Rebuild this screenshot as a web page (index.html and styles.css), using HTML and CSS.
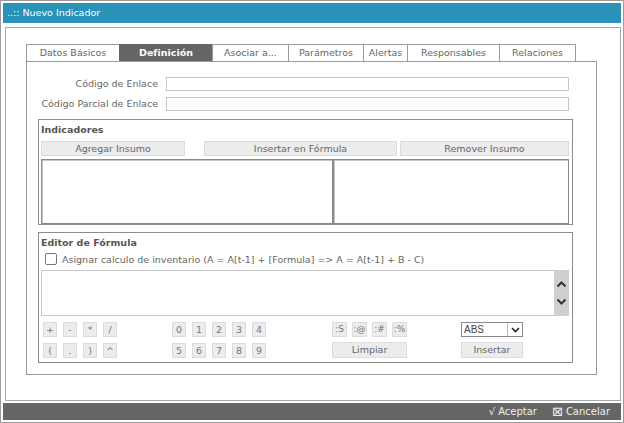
FILE: index.html
```html
<!DOCTYPE html>
<html lang="es">
<head>
<meta charset="utf-8">
<title>Nuevo Indicador</title>
<link rel="stylesheet" href="styles.css">
</head>
<body>
<div class="window">
  <div class="titlebar">..:: Nuevo Indicador</div>
  <div class="panel">
    <div class="tabs">
      <div class="tab">Datos Básicos</div>
      <div class="tab active">Definición</div>
      <div class="tab">Asociar a...</div>
      <div class="tab">Parámetros</div>
      <div class="tab">Alertas</div>
      <div class="tab">Responsables</div>
      <div class="tab last">Relaciones</div>
    </div>
    <div class="tabpanel">
      <div class="form">
        <label class="lbl">Código de Enlace</label>
        <div class="input"></div>
        <label class="lbl">Código Parcial de Enlace</label>
        <div class="input"></div>
      </div>

      <div class="fieldset indicadores">
        <div class="legend">Indicadores</div>
        <div class="btnrow">
          <div class="btn btn-agregar">Agregar Insumo</div>
          <div class="btn btn-insertar">Insertar en Fórmula</div>
          <div class="btn btn-remover">Remover Insumo</div>
        </div>
        <div class="lists">
          <div class="list"></div>
          <div class="list"></div>
        </div>
      </div>

      <div class="fieldset editor">
        <div class="legend">Editor de Fórmula</div>
        <div class="checkrow">
          <span class="checkbox"></span>
          <span>Asignar calculo de inventario (A = A[t-1] + [Formula] =&gt; A = A[t-1] + B - C)</span>
        </div>
        <div class="textarea">
          <div class="scrollbar">
            <svg width="11" height="8" viewBox="0 0 11 8"><path d="M1.5 6.5 L5.5 2.5 L9.5 6.5" fill="none" stroke="#333" stroke-width="2"/></svg>
            <svg width="11" height="8" viewBox="0 0 11 8"><path d="M1.5 1.5 L5.5 5.5 L9.5 1.5" fill="none" stroke="#333" stroke-width="2"/></svg>
          </div>
        </div>
        <div class="calc">
          <div class="group g-ops">
            <div class="key">+</div><div class="key">-</div><div class="key">*</div><div class="key">/</div>
            <div class="key">(</div><div class="key">.</div><div class="key">)</div><div class="key">^</div>
          </div>
          <div class="group g-digits">
            <div class="key">0</div><div class="key">1</div><div class="key">2</div><div class="key">3</div><div class="key">4</div>
            <div class="key">5</div><div class="key">6</div><div class="key">7</div><div class="key">8</div><div class="key">9</div>
          </div>
          <div class="group g-special">
            <div class="key wide">:S</div><div class="key wide">:@</div><div class="key wide">:#</div><div class="key wide">:%</div>
            <div class="btn btn-limpiar">Limpiar</div>
          </div>
          <div class="group g-func">
            <div class="select">
              <span class="select-text">ABS</span>
              <span class="select-arrow"><svg width="9" height="6" viewBox="0 0 9 6"><path d="M1 1 L4.5 4.5 L8 1" fill="none" stroke="#222" stroke-width="1.6"/></svg></span>
            </div>
            <div class="btn btn-func">Insertar</div>
          </div>
        </div>
      </div>
    </div>
  </div>
  <div class="footer">
    <span class="action"><span class="glyph">√</span> Aceptar</span>
    <span class="action"><span class="glyph box">⊠</span> Cancelar</span>
  </div>
</div>
</body>
</html>
```

FILE: styles.css
```css
* { box-sizing: border-box; }
html, body { margin: 0; padding: 0; background: #fff; }
body {
  width: 624px;
  height: 423px;
  font-family: "DejaVu Sans", Verdana, sans-serif;
  font-size: 9.5px;
  color: #555;
}
.window {
  width: 624px;
  height: 423px;
  border: 1px solid #9c9c9c;
  padding: 2px;
  display: flex;
  flex-direction: column;
}
.titlebar {
  height: 20px;
  background: #2a91b8;
  color: #fff;
  line-height: 20px;
  padding-left: 4px;
}
.panel {
  margin: 4px 0 0 2px;
  height: 374px;
  border: 1px solid #a8a8a8;
  padding: 16px 0 0 20px;
}
.tabs {
  display: grid;
  grid-template-columns: 93px 93px 76px 75px 44px 92px 77px;
  height: 17px;
}
.tab {
  border-top: 1px solid #999;
  border-left: 1px solid #999;
  text-align: center;
  line-height: 16px;
  color: #666;
  background: #fff;
}
.tab.last { border-right: 1px solid #999; }
.tab.active {
  background: #666;
  color: #fff;
  font-weight: bold;
  border-color: #666;
}
.tabpanel {
  width: 571px;
  height: 314px;
  border: 1px solid #999;
  padding-top: 15px;
}
.form {
  display: grid;
  grid-template-columns: 131px 403px;
  column-gap: 8px;
  row-gap: 6px;
}
.lbl {
  text-align: right;
  line-height: 14px;
  color: #666;
}
.input {
  height: 14px;
  border: 1px solid #c8c8c8;
  background: #fff;
}
.fieldset {
  margin: 8px 23px 0 11px;
  border: 1px solid #8c8c8c;
  padding: 0 2px;
}
.legend {
  font-weight: bold;
  color: #555;
  line-height: 12px;
  padding-top: 4px;
}
.indicadores { height: 106px; }
.btnrow {
  display: flex;
  margin-top: 5px;
  height: 15px;
}
.btn {
  height: 15px;
  background: #ececec;
  border: 1px solid #dcdcdc;
  color: #666;
  text-align: center;
  line-height: 13px;
}
.btn-agregar { width: 144px; }
.btn-insertar { width: 193px; margin-left: 19px; }
.btn-remover { width: 169px; margin-left: 3px; }
.lists {
  display: grid;
  grid-template-columns: 292px 236px;
  margin-top: 3px;
  height: 65px;
}
.list {
  border: 1px solid #8a8a8a;
  box-shadow: inset 1px 1px 0 #c8c8c8;
  background: #fff;
}
.editor { margin-top: 7px; height: 131px; }
.checkrow {
  display: flex;
  align-items: center;
  gap: 5px;
  margin-top: 3px;
  padding-left: 4px;
  height: 14px;
  color: #666;
}
.checkbox {
  width: 12px;
  height: 12px;
  border: 1px solid #777;
  border-radius: 2px;
  background: #fff;
}
.textarea {
  margin-top: 4px;
  width: 528px;
  height: 46px;
  border: 1px solid #c8c8c8;
  border-right: 0;
  display: flex;
  justify-content: flex-end;
}
.scrollbar {
  width: 15px;
  margin: -1px 0;
  background: #cfcfcf;
  display: flex;
  flex-direction: column;
  align-items: center;
  justify-content: center;
  gap: 10px;
}
.calc {
  display: flex;
  margin-top: 6px;
  padding-left: 2px;
}
.group {
  display: grid;
  column-gap: 6px;
  row-gap: 5px;
}
.g-ops { grid-template-columns: repeat(4, 14px); }
.g-digits { grid-template-columns: repeat(5, 14px); margin-left: 55px; }
.g-special { grid-template-columns: repeat(4, 15px); column-gap: 5px; margin-left: 66px; }
.g-func { grid-template-columns: 62px; margin-left: 54px; }
.key {
  height: 15px;
  background: #ececec;
  border: 1px solid #dcdcdc;
  color: #777;
  text-align: center;
  line-height: 13px;
}
.key.wide { font-size: 9px; }
.btn-limpiar { grid-column: 1 / -1; height: 16px; }
.btn-func { height: 16px; }
.select {
  height: 15px;
  border: 1px solid #888;
  background: #fff;
  display: flex;
  justify-content: space-between;
  color: #444;
  font-family: "Liberation Sans", Arial, sans-serif;
  font-size: 10px;
  line-height: 13px;
}
.select-text { padding-left: 2px; }
.select-arrow {
  width: 15px;
  border-left: 1px solid #bbb;
  display: flex;
  align-items: center;
  justify-content: center;
}
.footer {
  margin-top: 2px;
  height: 17px;
  background: #666;
  color: #eee;
  display: flex;
  justify-content: flex-end;
  align-items: center;
  gap: 15px;
  padding-right: 11px;
  font-size: 10px;
}
.action {
  display: flex;
  align-items: center;
  gap: 3px;
}
.glyph.box {
  font-size: 13px;
  line-height: 13px;
}
```
